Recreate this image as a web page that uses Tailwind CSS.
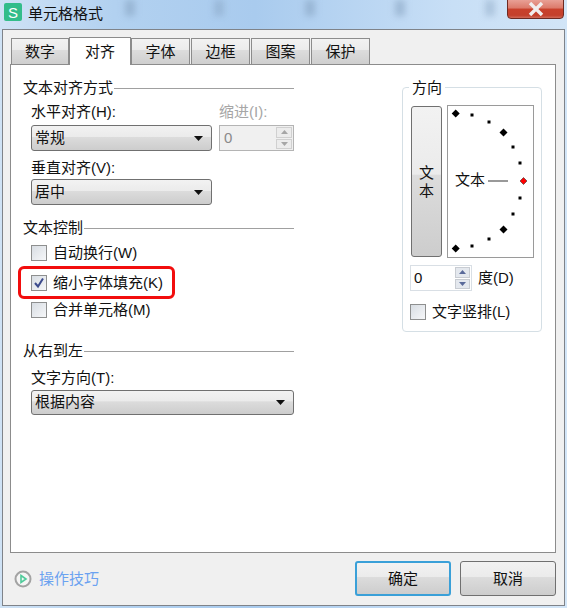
<!DOCTYPE html>
<html lang="zh-CN">
<head>
  <meta charset="UTF-8" />
  <title>单元格格式</title>
  <script src="https://cdn.jsdelivr.net/npm/@tailwindcss/browser@4"></script>
</head>
<body class="font-['Liberation_Sans','Noto_Sans_CJK_SC',sans-serif] text-[15px] text-[#111]">
  <div class="relative w-[567px] h-[608px] overflow-hidden bg-[linear-gradient(90deg,#cfe2f5,#b2d1f0_20%,#a9cbee_45%,#c8dff6_80%,#d2e5f7)]">

    <!-- Title bar -->
    <div class="relative h-[29px] flex items-start pl-[4px] pt-[3px]">
      <div class="absolute top-0 left-[125px] w-[10px] h-[16px] bg-[#7f9cba]/50 blur-[3px]"></div>
      <div class="absolute top-0 left-[214px] w-[10px] h-[16px] bg-[#7f9cba]/40 blur-[3px]"></div>
      <div class="absolute top-0 left-[305px] w-[10px] h-[16px] bg-[#7f9cba]/50 blur-[3px]"></div>
      <div class="absolute top-0 left-[395px] w-[10px] h-[16px] bg-[#7f9cba]/50 blur-[3px]"></div>
      <div class="absolute top-0 left-[485px] w-[10px] h-[16px] bg-[#7f9cba]/40 blur-[3px]"></div>
      <div class="w-[18px] h-[18px] rounded-[2px] bg-[#33bd8a] flex items-center justify-center text-white text-[15px] leading-none">S</div>
      <div class="relative ml-[6px] mt-[1px] leading-[20px]">单元格格式</div>
      <div class="absolute right-[3px] top-[-1px] w-[57px] h-[20px] rounded-b-[4px] border border-[#6e2a22] bg-[linear-gradient(#e8a095,#dc7a6a_45%,#c9412c_50%,#c4402c_85%,#d06a58)] flex items-center justify-center">
        <svg width="18" height="14" viewBox="0 0 18 14"><path d="M3 1 L15 13 M15 1 L3 13" fill="none" stroke="#f1eeee" stroke-width="3.4"/></svg>
      </div>
    </div>

    <!-- Dialog body -->
    <div class="mx-[2px] h-[577px] border border-[#7f8389] bg-[#f0f0f0] px-[7px]">

      <!-- Tabs -->
      <div class="flex items-end h-[34px] pl-[1px] relative z-10">
        <div class="w-[58px] h-[26px] pt-[2px] border border-b-0 border-[#8c8c8c] flex items-center justify-center bg-[linear-gradient(#f2f2f2,#ebebeb_45%,#dcdcdc_46%,#cfcfcf)]">数字</div>
        <div class="w-[62px] h-[28px] mb-[-1px] pt-[1px] border border-b-0 border-[#8c8c8c] flex items-center justify-center bg-white">对齐</div>
        <div class="w-[59px] h-[26px] pt-[2px] border border-b-0 border-[#8c8c8c] flex items-center justify-center bg-[linear-gradient(#f2f2f2,#ebebeb_45%,#dcdcdc_46%,#cfcfcf)]">字体</div>
        <div class="w-[59px] h-[26px] ml-[1px] pt-[2px] border border-b-0 border-[#8c8c8c] flex items-center justify-center bg-[linear-gradient(#f2f2f2,#ebebeb_45%,#dcdcdc_46%,#cfcfcf)]">边框</div>
        <div class="w-[59px] h-[26px] ml-[1px] pt-[2px] border border-b-0 border-[#8c8c8c] flex items-center justify-center bg-[linear-gradient(#f2f2f2,#ebebeb_45%,#dcdcdc_46%,#cfcfcf)]">图案</div>
        <div class="w-[59px] h-[26px] ml-[1px] pt-[2px] border border-b-0 border-[#8c8c8c] flex items-center justify-center bg-[linear-gradient(#f2f2f2,#ebebeb_45%,#dcdcdc_46%,#cfcfcf)]">保护</div>
      </div>

      <!-- Panel -->
      <div class="h-[489px] w-[546px] border border-[#8c8c8c] bg-white flex pl-[12px]">

        <!-- Left column -->
        <div class="w-[271px] pt-[14px]">
          <div class="flex items-center h-[18px] gap-[1px]"><span>文本对齐方式</span><div class="flex-1 h-px bg-[#a0a0a0]"></div></div>

          <div class="flex gap-[7px] mt-[6px] pl-[8px]">
            <div class="w-[181px]">
              <div class="h-[18px] leading-[18px]">水平对齐(H):</div>
              <div class="mt-[4px] h-[26px] rounded-[3px] border border-[#707070] bg-[linear-gradient(#f2f2f2,#ebebeb_45%,#dcdcdc_46%,#cdcdcd)] flex items-center justify-between pl-[3px] pr-[8px]">
                <span>常规</span>
                <svg width="9" height="5" viewBox="0 0 9 5"><path d="M0 0H9L4.5 5Z" fill="#111"/></svg>
              </div>
            </div>
            <div class="w-[75px]">
              <div class="h-[18px] leading-[18px] text-[#a6a6a6]">缩进(I):</div>
              <div class="mt-[4px] h-[26px] border border-[#b4b4b4] bg-[#f0f0f0] flex items-center justify-between pl-[4px] pr-[1px] text-[#8a8a8a]">
                <span>0</span>
                <div class="w-[16px] h-[22px] flex flex-col gap-px">
                  <div class="flex-1 border border-[#d0d0d0] bg-[#ececec] flex items-center justify-center"><svg width="7" height="4" viewBox="0 0 7 4"><path d="M0 4H7L3.5 0Z" fill="#a6a6a6"/></svg></div>
                  <div class="flex-1 border border-[#d0d0d0] bg-[#ececec] flex items-center justify-center"><svg width="7" height="4" viewBox="0 0 7 4"><path d="M0 0H7L3.5 4Z" fill="#a6a6a6"/></svg></div>
                </div>
              </div>
            </div>
          </div>

          <div class="pl-[8px] mt-[8px]">
            <div class="h-[18px] leading-[18px]">垂直对齐(V):</div>
            <div class="mt-[2px] w-[181px] h-[26px] rounded-[3px] border border-[#707070] bg-[linear-gradient(#f2f2f2,#ebebeb_45%,#dcdcdc_46%,#cdcdcd)] flex items-center justify-between pl-[3px] pr-[8px]">
              <span>居中</span>
              <svg width="9" height="5" viewBox="0 0 9 5"><path d="M0 0H9L4.5 5Z" fill="#111"/></svg>
            </div>
          </div>

          <div class="flex items-center h-[18px] gap-[1px] mt-[14px]"><span>文本控制</span><div class="flex-1 h-px bg-[#a0a0a0]"></div></div>

          <div class="flex items-center gap-[6px] h-[18px] mt-[7px] pl-[8px]">
            <div class="w-[16px] h-[16px] border border-[#8e8f8f] bg-[linear-gradient(135deg,#d8dde3,#f6f7f9)]"></div>
            <span>自动换行(W)</span>
          </div>

          <div class="relative flex items-center gap-[6px] h-[18px] mt-[12px] pl-[8px]">
            <div class="absolute left-[-5px] top-[-8px] w-[157px] h-[33px] rounded-[6px] border-[3px] border-[#f20d0d]"></div>
            <div class="w-[16px] h-[16px] border border-[#8e8f8f] bg-[linear-gradient(135deg,#d8dde3,#f6f7f9)] flex items-center justify-center">
              <svg width="12" height="12" viewBox="0 0 12 12"><path d="M2 6 L5 9.5 L10 1.5" fill="none" stroke="#3c4a8c" stroke-width="2"/></svg>
            </div>
            <span>缩小字体填充(K)</span>
          </div>

          <div class="flex items-center gap-[6px] h-[18px] mt-[9px] pl-[8px]">
            <div class="w-[16px] h-[16px] border border-[#8e8f8f] bg-[linear-gradient(135deg,#d8dde3,#f6f7f9)]"></div>
            <span>合并单元格(M)</span>
          </div>

          <div class="flex items-center h-[18px] gap-[1px] mt-[23px]"><span>从右到左</span><div class="flex-1 h-px bg-[#a0a0a0]"></div></div>

          <div class="pl-[8px] mt-[9px]">
            <div class="h-[18px] leading-[18px]">文字方向(T):</div>
            <div class="mt-[3px] h-[25px] rounded-[3px] border border-[#707070] bg-[linear-gradient(#f2f2f2,#ebebeb_45%,#dcdcdc_46%,#cdcdcd)] flex items-center justify-between pl-[3px] pr-[8px]">
              <span>根据内容</span>
              <svg width="9" height="5" viewBox="0 0 9 5"><path d="M0 0H9L4.5 5Z" fill="#111"/></svg>
            </div>
          </div>
        </div>

        <!-- Direction group -->
        <div class="relative ml-[108px] mt-[22px] w-[140px] h-[245px] rounded-[4px] border border-[#d5dfe5] pl-[8px] pt-[18px]">
          <div class="absolute left-[6px] top-[-9px] px-[3px] bg-white leading-[18px]">方向</div>
          <div class="flex gap-[5px]">
            <div class="w-[31px] h-[151px] rounded-[3px] border border-[#707070] bg-[linear-gradient(#f2f2f2,#ebebeb_45%,#dcdcdc_46%,#cdcdcd)] flex flex-col items-center justify-center leading-[18px]">
              <span>文</span><span>本</span>
            </div>
            <div class="relative w-[87px] h-[153px] mt-[-1px] border border-[#9a9a9a]">
              <svg class="absolute left-[-1px] top-[-1px]" width="87" height="153" viewBox="447 105 87 153">
                <path d="M455.7 109.5l4 4-4 4-4-4z M503.5 128.5l4 4-4 4-4-4z M503.5 225.5l4 4-4 4-4-4z M455.7 244.5l4 4-4 4-4-4z" fill="#000"/>
                <path d="M470.5 113.5h3v3h-3z M487.5 120.5h3v3h-3z M511.5 145.5h3v3h-3z M518.5 161.5h3v3h-3z M518.5 196.5h3v3h-3z M511.5 212.5h3v3h-3z M487.5 237.5h3v3h-3z M470.5 244.5h3v3h-3z" fill="#000"/>
                <rect x="488" y="180" width="20" height="2" fill="#999"/>
                <path d="M523.5 177.5l3.5 3.5-3.5 3.5-3.5-3.5z" fill="#f00" stroke="#333" stroke-width="0.6"/>
              </svg>
              <span class="absolute left-[7px] top-[65px] leading-[18px]">文本</span>
            </div>
          </div>

          <div class="flex items-center mt-[7px] ml-[-1px]">
            <div class="w-[62px] h-[26px] border border-[#d9dfe5] bg-white flex items-center justify-between pl-[3px] pr-[1px]">
              <span>0</span>
              <div class="w-[15px] h-[22px] flex flex-col gap-px">
                <div class="flex-1 border border-[#c8ccd2] bg-[#e4e8ee] flex items-center justify-center"><svg width="7" height="4" viewBox="0 0 7 4"><path d="M0 4H7L3.5 0Z" fill="#5a6a9a"/></svg></div>
                <div class="flex-1 border border-[#c8ccd2] bg-[#e4e8ee] flex items-center justify-center"><svg width="7" height="4" viewBox="0 0 7 4"><path d="M0 0H7L3.5 4Z" fill="#5a6a9a"/></svg></div>
              </div>
            </div>
            <span class="ml-[6px]">度(D)</span>
          </div>

          <div class="flex items-center gap-[6px] h-[18px] mt-[12px] ml-[-1px]">
            <div class="w-[16px] h-[16px] border border-[#8e8f8f] bg-[linear-gradient(135deg,#d8dde3,#f6f7f9)]"></div>
            <span>文字竖排(L)</span>
          </div>
        </div>
      </div>

      <!-- Footer -->
      <div class="flex items-center h-[35px] mt-[8px]">
        <svg class="ml-[4px]" width="18" height="18" viewBox="0 0 18 18">
          <circle cx="9" cy="9" r="7.5" fill="#f5f5f5" stroke="#a3a3a3" stroke-width="2"/>
          <path d="M7 5.5 L12 9 L7 12.5Z" fill="none" stroke="#4fcb9a" stroke-width="1.6"/>
        </svg>
        <span class="ml-[7px] pt-[2px] text-[#6ba2f0]">操作技巧</span>
        <div class="ml-auto mr-[1px] flex gap-[9px]">
          <div class="w-[96px] h-[35px] pt-[2px] rounded-[3px] border-2 border-[#3aa0d8] bg-[linear-gradient(#f2f2f2,#ebebeb_45%,#dcdcdc_46%,#cdcdcd)] flex items-center justify-center">确定</div>
          <div class="w-[96px] h-[35px] pt-[2px] rounded-[3px] border border-[#707070] bg-[linear-gradient(#f2f2f2,#ebebeb_45%,#dcdcdc_46%,#cdcdcd)] flex items-center justify-center">取消</div>
        </div>
      </div>
    </div>
  </div>
</body>
</html>
